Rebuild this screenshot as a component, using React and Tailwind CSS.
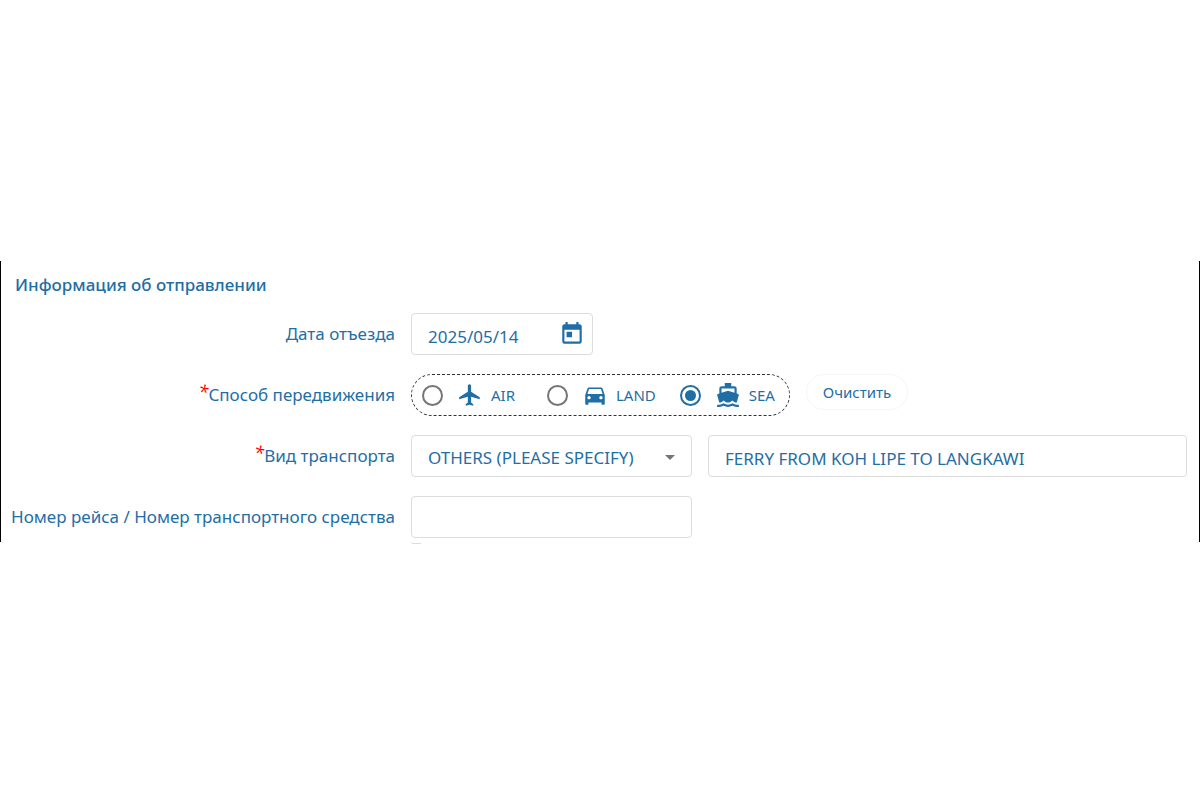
import { useState } from "react";
import {
  MdArrowDropDown,
  MdDirectionsBoat,
  MdDirectionsCar,
  MdFlight,
  MdToday,
} from "react-icons/md";

const modes = [
  { id: "AIR", icon: MdFlight },
  { id: "LAND", icon: MdDirectionsCar },
  { id: "SEA", icon: MdDirectionsBoat },
];

const field =
  "h-[42px] w-full rounded border border-[#dcdcdc] bg-white px-4 pt-1 text-[17px] text-[#1f6ea5] outline-none";

function Label({ htmlFor, id, required, children }) {
  return (
    <label
      htmlFor={htmlFor}
      id={id}
      className="justify-self-end text-[17px] leading-6 whitespace-nowrap"
    >
      {required && (
        <span className="align-top text-[18px] leading-4 text-[#ff0000] italic">*</span>
      )}
      {children}
    </label>
  );
}

function Row({ children }) {
  return (
    <div className="grid grid-cols-[380px_minmax(0,1fr)] items-center gap-4">
      {children}
    </div>
  );
}

export default function App() {
  const [mode, setMode] = useState("SEA");
  const [date, setDate] = useState("2025/05/14");
  const [details, setDetails] = useState("FERRY FROM KOH LIPE TO LANGKAWI");
  const [number, setNumber] = useState("");

  return (
    <main className="min-h-screen bg-white pt-[261px] font-['Noto_Sans',sans-serif] text-[#1f6ea5]">
      <form className="border-x border-black pr-3 pb-1 pl-3.5">
        <h2 className="pt-3 text-[17px] leading-6 font-medium">Информация об отправлении</h2>

        <div className="mt-4 flex flex-col gap-[19px]">
          <Row>
            <Label htmlFor="date">Дата отъезда</Label>
            <div className="relative w-[182px]">
              <input
                id="date"
                className={field}
                value={date}
                onChange={(e) => setDate(e.target.value)}
              />
              <button
                type="button"
                aria-label="Дата отъезда"
                className="absolute top-2 right-2"
              >
                <MdToday className="size-[26px]" />
              </button>
            </div>
          </Row>

          <Row>
            <Label id="mode" required>Способ передвижения</Label>
            <div className="flex items-center gap-4">
              <div
                role="radiogroup"
                aria-labelledby="mode"
                className="flex h-[42px] items-center gap-6 rounded-full border border-dashed border-[#333] pr-2 pl-2.5"
              >
                {modes.map(({ id, icon: Icon }) => (
                  <label key={id} className="flex items-center text-[15px]">
                    <input
                      type="radio"
                      name="mode"
                      checked={mode === id}
                      onChange={() => setMode(id)}
                      className="mr-3.5 grid size-[21px] appearance-none place-items-center rounded-full border-2 border-[#757575] checked:border-[#1f6ea5] checked:before:size-[11px] checked:before:rounded-full checked:before:bg-[#1f6ea5]"
                    />
                    <Icon className="mr-2 size-[26px]" />
                    <span className="min-w-8">{id}</span>
                  </label>
                ))}
              </div>
              <button
                type="button"
                onClick={() => setMode("")}
                className="mb-1.5 h-9 rounded-full border border-[#f6f6f6] px-4 text-[15px]"
              >
                Очистить
              </button>
            </div>
          </Row>

          <Row>
            <Label htmlFor="transport" required>Вид транспорта</Label>
            <div className="flex gap-4">
              <div className="relative w-[281px] shrink-0">
                <select id="transport" className={`${field} appearance-none`}>
                  <option>OTHERS (PLEASE SPECIFY)</option>
                </select>
                <MdArrowDropDown className="pointer-events-none absolute top-2.5 right-2.5 size-6 text-[#757575]" />
              </div>
              <input
                aria-label="Вид транспорта"
                className={`${field} min-w-0 flex-1`}
                value={details}
                onChange={(e) => setDetails(e.target.value)}
              />
            </div>
          </Row>

          <Row>
            <Label htmlFor="number">Номер рейса / Номер транспортного средства</Label>
            <div className="w-[281px]">
              <input
                id="number"
                className={field}
                value={number}
                onChange={(e) => setNumber(e.target.value)}
              />
            </div>
          </Row>
        </div>
      </form>
      <div className="ml-[411px] h-0.5 w-2.5 rounded-bl border-b border-[#dcdcdc]" />
    </main>
  );
}
